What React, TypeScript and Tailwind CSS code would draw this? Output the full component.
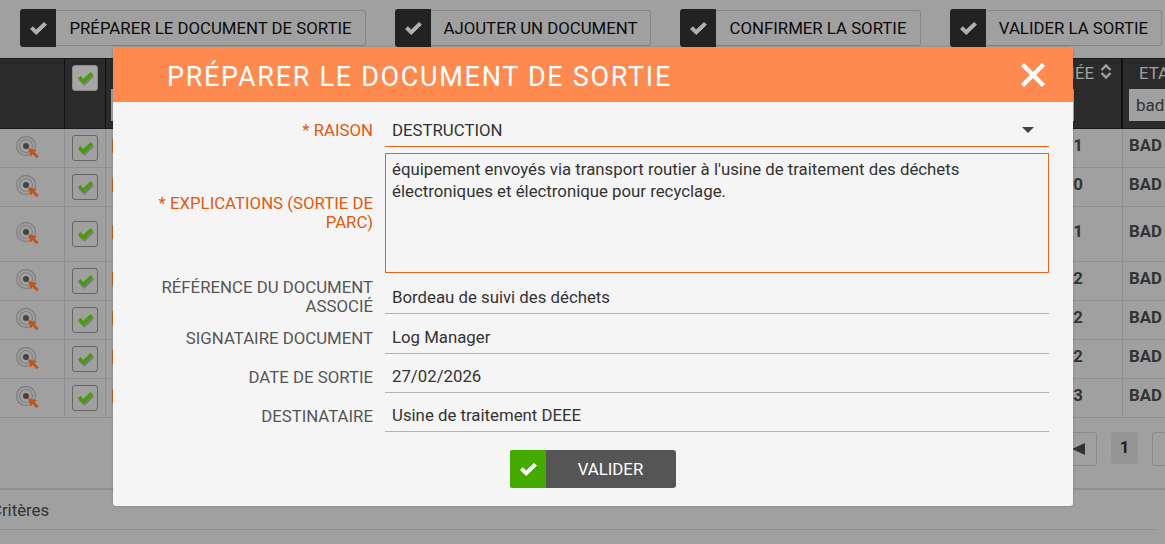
import React from 'react';

const actions = [
  { label: 'PRÉPARER LE DOCUMENT DE SORTIE', width: 'w-[346px]' },
  { label: 'AJOUTER UN DOCUMENT', width: 'w-[256px]' },
  { label: 'CONFIRMER LA SORTIE', width: 'w-[241px]' },
  { label: 'VALIDER LA SORTIE', width: 'w-[212px]' },
];

const rows = [
  { year: '2021', height: 'h-[39px]' },
  { year: '2020', height: 'h-[39px]' },
  { year: '2021', height: 'h-[55px]' },
  { year: '2022', height: 'h-[39px]' },
  { year: '2022', height: 'h-[39px]' },
  { year: '2022', height: 'h-[39px]' },
  { year: '2023', height: 'h-[39px]' },
];

const fields = [
  { label: ['RÉFÉRENCE DU DOCUMENT', 'ASSOCIÉ'], value: 'Bordeau de suivi des déchets', height: 'h-[41px]', labelPad: 'mb-[-2px] leading-[19px]' },
  { label: ['SIGNATAIRE DOCUMENT'], value: 'Log Manager', height: 'h-[40px]', labelPad: 'pb-[7px] leading-[18px]' },
  { label: ['DATE DE SORTIE'], value: '27/02/2026', height: 'h-[39px]', labelPad: 'pb-[7px] leading-[18px]' },
  { label: ['DESTINATAIRE'], value: 'Usine de traitement DEEE', height: 'h-[39px]', labelPad: 'pb-[7px] leading-[18px]' },
];

function Check({ className }: { className: string }) {
  return (
    <svg viewBox="0 0 20 16" className={className} fill="currentColor" stroke="currentColor" strokeWidth="1" strokeLinejoin="round">
      <path d="M1.5 8.5L4 6l3.5 3.5L16 1.5l2.5 2.5L7.5 14.5z" />
    </svg>
  );
}

function CheckBox({ dark }: { dark?: boolean }) {
  return (
    <div
      className={`flex h-[26px] w-[26px] items-center justify-center rounded-[3px] border ${
        dark ? 'border-[#8a8a8a] bg-[#a6a6a6]' : 'border-[#666666] bg-[#a0a0a0]'
      }`}
    >
      <Check className="h-[14px] w-[17px] text-[#4a9a10] drop-shadow-[1px_2px_0_rgba(0,0,0,0.22)]" />
    </div>
  );
}

function TargetIcon() {
  return (
    <svg viewBox="0 0 26 26" className="h-[26px] w-[26px]">
      <circle cx="11" cy="11" r="9.5" fill="none" stroke="#828282" strokeWidth="1.4" />
      <circle cx="11" cy="11" r="6.5" fill="none" stroke="#828282" strokeWidth="1.2" />
      <circle cx="11" cy="11" r="3" fill="#444444" />
      <path d="M13 13l9 2.4-2.6 1.7 4.2 4.2-2 2-4.2-4.2-1.7 2.6z" fill="#c2541a" />
    </svg>
  );
}

function ActionButton({ label, width }: { label: string; width: string }) {
  return (
    <div className={`flex h-[38px] ${width}`}>
      <div className="flex w-[36px] shrink-0 items-center justify-center rounded-l-[3px] bg-[#222222]">
        <Check className="h-[15px] w-[19px] text-[#b0b0b0]" />
      </div>
      <div className="my-px flex flex-1 items-center justify-center rounded-r-[3px] border border-l-0 border-[#858585] pt-[1px] text-[16.8px] text-[#0a0a0a]">
        {label}
      </div>
    </div>
  );
}

function TableHeader() {
  return (
    <div className="flex h-[71px] border-y border-[#1a1a1a] bg-[#2b2b2b]">
      <div className="w-[65px] border-r border-[#111111]" />
      <div className="w-[41px] border-r border-[#111111] pl-[7px] pt-[6px]">
        <CheckBox dark />
      </div>
      <div className="flex-1 pl-[5px] pt-[30px]">
        <div className="h-[32px] bg-[#a0a0a0]" />
      </div>
      <div className="w-[49px] border-r-2 border-[#111111] pt-[4px] text-[16.8px] leading-[20px] text-[#a0a0a0]">
        <div className="flex h-[25px] items-start justify-end gap-[6px] pr-[9px]">
          IÉE
          <svg viewBox="0 0 12 16" className="h-[17px] w-[12px] shrink-0" fill="none" stroke="#a0a0a0" strokeWidth="2.4">
            <path d="M1.5 6.5L6 2l4.5 4.5M1.5 9.5L6 14l4.5-4.5" />
          </svg>
        </div>
      </div>
      <div className="w-[42px] shrink-0 pl-[6px] pt-[4px]">
        <div className="h-[26px] pl-[10px] text-[16.8px] leading-[20px] text-[#a0a0a0]">ETAT</div>
        <div className="h-[32px] w-full bg-[#a0a0a0] pl-[7px] text-[17px] leading-[32px] text-[#333333]">bad</div>
      </div>
    </div>
  );
}

function TableRow({ year, height }: { year: string; height: string }) {
  return (
    <div className={`flex ${height} items-center border-b border-[#8f8f8f] pb-[4px] text-[16.8px] text-[#333333]`}>
      <div className="mb-[-4px] flex h-[calc(100%+4px)] w-[65px] items-center border-r border-[#8f8f8f] pl-[15px]">
        <TargetIcon />
      </div>
      <div className="mb-[-4px] flex h-[calc(100%+4px)] w-[41px] items-center border-r border-[#8f8f8f] pl-[7px]">
        <CheckBox />
      </div>
      <div className="flex flex-1 items-center pl-[6px]">
        <div className="h-[14px] w-[4px] bg-[#c2651f]" />
      </div>
      <div className="mr-[39px] font-bold">{year}</div>
      <div className="mb-[-4px] flex h-[calc(100%+4px)] w-[43px] shrink-0 items-center border-l border-[#8f8f8f] pb-[4px] pl-[6px] font-bold">
        BAD
      </div>
    </div>
  );
}

function Modal() {
  return (
    <div className="absolute left-[113px] top-[47px] w-[960px] overflow-hidden rounded-[3px] bg-[#f5f5f5] shadow-[0_0_3px_rgba(0,0,0,0.2)]">
      <div className="flex h-[55px] items-center justify-between bg-[#ff8a50] pl-[54px] pr-[27px] text-white">
        <span className="pt-[5px] text-[27px] tracking-[1.7px]">PRÉPARER LE DOCUMENT DE SORTIE</span>
        <svg viewBox="0 0 26 26" className="h-[26px] w-[26px]" fill="none" stroke="#ffffff" strokeWidth="4.4">
          <path d="M2.5 2.5l21 21M23.5 2.5l-21 21" />
        </svg>
      </div>
      <div className="pt-[11px] pr-[24px] text-[16.8px]">
        <div className="flex h-[34px]">
          <div className="w-[260px] shrink-0 pt-[7px] text-right leading-[20px] text-[#e2590f]">* RAISON</div>
          <div className="ml-[12px] flex flex-1 items-start justify-between border-b border-[#e8661a] pl-[7px] pr-[15px] pt-[7px] leading-[20px] text-[#333333]">
            DESTRUCTION
            <span className="mt-[7px] h-0 w-0 border-x-[6px] border-t-[6px] border-x-transparent border-t-[#444444]" />
          </div>
        </div>
        <div className="mt-[6px] flex h-[120px]">
          <div className="w-[260px] shrink-0 pt-[41px] text-right leading-[19px] text-[#e2590f]">
            * EXPLICATIONS (SORTIE DE
            <br />
            PARC)
          </div>
          <div className="ml-[12px] flex-1 border border-[#e8661a] px-[6px] pt-[4px] leading-[22px] text-[#333333]">
            équipement envoyés via transport routier à l'usine de traitement des déchets
            <br />
            électroniques et électronique pour recyclage.
          </div>
        </div>
        {fields.map((field) => (
          <div key={field.value} className={`flex ${field.height} items-end`}>
            <div className={`w-[260px] shrink-0 text-right text-[#555555] ${field.labelPad}`}>
              {field.label.map((line) => (
                <div key={line}>{line}</div>
              ))}
            </div>
            <div className="ml-[12px] flex h-full flex-1 items-end border-b border-[#b5b5b5] pb-[6px] pl-[7px] leading-[20px] text-[#333333]">
              {field.value}
            </div>
          </div>
        ))}
      </div>
      <div className="flex justify-center py-[18px]">
        <div className="flex h-[38px] w-[166px] overflow-hidden rounded-[3px] bg-[#555555]">
          <div className="flex w-[36px] items-center justify-center bg-[#44aa00]">
            <Check className="h-[15px] w-[19px] text-white" />
          </div>
          <div className="flex flex-1 items-center justify-center pr-[1px] pt-[1px] text-[16.8px] text-white">VALIDER</div>
        </div>
      </div>
    </div>
  );
}

export default function App() {
  return (
    <div className="relative h-[544px] w-[1165px] overflow-hidden bg-[#a0a0a0] font-['Roboto',sans-serif]">
      <div className="flex justify-between pl-[20px] pr-[3px] pt-[9px]">
        {actions.map((action) => (
          <ActionButton key={action.label} label={action.label} width={action.width} />
        ))}
      </div>
      <div className="mt-[11px]">
        <TableHeader />
        {rows.map((row, i) => (
          <TableRow key={i} year={row.year} height={row.height} />
        ))}
      </div>
      <div className="flex h-[72px] justify-end border-b-2 border-[#8f8f8f] pt-[14px]">
        <div className="flex h-[34px] w-[40px] items-center justify-end rounded-[3px] border border-[#8a8a8a] pr-[11px]">
          <span className="h-0 w-0 border-y-[6px] border-r-[13px] border-y-transparent border-r-[#333333]" />
        </div>
        <div className="ml-[14px] flex h-[32px] w-[27px] items-center justify-center rounded-[3px] bg-[#959595] text-[16.8px] font-bold text-[#222222]">
          1
        </div>
        <div className="ml-[14px] h-[34px] w-[13px] rounded-l-[3px] border border-r-0 border-[#8a8a8a]" />
      </div>
      <div className="h-[40px] -translate-x-[9px] border-b border-[#8f8f8f] pt-[10px] text-[16.8px] leading-[20px] text-[#333333]">
        Critères
      </div>
      <Modal />
    </div>
  );
}
